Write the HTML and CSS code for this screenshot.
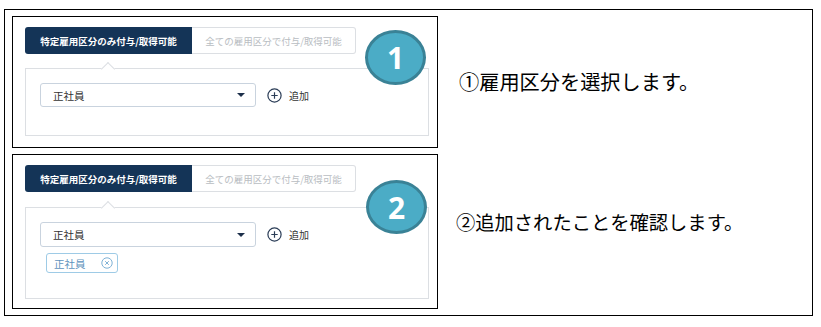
FILE: index.html
```html
<!DOCTYPE html>
<html lang="ja">
    <head>
        <meta charset="UTF-8" />
        <meta name="viewport" content="width=device-width, initial-scale=1.0" />
        <title>雇用区分の追加</title>
        <link rel="stylesheet" href="styles.css">
    </head>
    <body>
        <div class="frame">
            <div class="row">
                <div class="panel">
                    <div class="tabs">
                        <div class="tab tab-active">特定雇用区分のみ付与/取得可能</div>
                        <div class="tab">全ての雇用区分で付与/取得可能</div>
                    </div>
                    <div class="card card-short">
                        <div class="select-row">
                            <div class="select">
                                <span>正社員</span>
                                <span class="select-arrow"></span>
                            </div>
                            <svg class="add-icon" width="15" height="15" viewBox="0 0 15 15">
                                <circle cx="7.5" cy="7.5" r="6.6" fill="none" stroke="#2b3d57" stroke-width="1.2" />
                                <path d="M7.5 4.3v6.4M4.3 7.5h6.4" stroke="#2b3d57" stroke-width="1.2" />
                            </svg>
                            <span class="add-label">追加</span>
                        </div>
                    </div>
                    <div class="badge badge-one">1</div>
                </div>
                <div class="note note-one">①雇用区分を選択します。</div>
            </div>

            <div class="row">
                <div class="panel panel-tall">
                    <div class="tabs">
                        <div class="tab tab-active">特定雇用区分のみ付与/取得可能</div>
                        <div class="tab">全ての雇用区分で付与/取得可能</div>
                    </div>
                    <div class="card card-tall">
                        <div class="select-row">
                            <div class="select">
                                <span>正社員</span>
                                <span class="select-arrow"></span>
                            </div>
                            <svg class="add-icon" width="15" height="15" viewBox="0 0 15 15">
                                <circle cx="7.5" cy="7.5" r="6.6" fill="none" stroke="#2b3d57" stroke-width="1.2" />
                                <path d="M7.5 4.3v6.4M4.3 7.5h6.4" stroke="#2b3d57" stroke-width="1.2" />
                            </svg>
                            <span class="add-label">追加</span>
                        </div>
                        <div class="chip">
                            <span>正社員</span>
                            <svg class="chip-close" width="12" height="12" viewBox="0 0 12 12">
                                <circle cx="6" cy="6" r="5.2" fill="none" stroke="#7fb2d6" stroke-width="1" />
                                <path d="M4.2 4.2l3.6 3.6M7.8 4.2l-3.6 3.6" stroke="#7fb2d6" stroke-width="1" />
                            </svg>
                        </div>
                    </div>
                    <div class="badge badge-two">2</div>
                </div>
                <div class="note note-two">②追加されたことを確認します。</div>
            </div>
        </div>
    </body>
</html>
```

FILE: styles.css
```css
* {
    box-sizing: border-box;
}

body {
    margin: 0;
    background: #fff;
    font-family: "Noto Sans CJK JP", "Noto Sans", sans-serif;
    color: #000;
}

.frame {
    margin: 9px 0 0 4px;
    width: 809px;
    height: 307px;
    border: 1px solid #000;
    padding: 6px 0 0 7px;
    display: flex;
    flex-direction: column;
    gap: 6px;
}

.row {
    display: flex;
    align-items: center;
}

.panel {
    position: relative;
    width: 426px;
    height: 132px;
    border: 1px solid #000;
    padding: 10px 0 0 12px;
}

.panel-tall {
    height: 155px;
}

.tabs {
    display: flex;
    width: 331px;
    height: 27px;
}

.tab {
    display: flex;
    justify-content: center;
    align-items: center;
    font-size: 9.5px;
    white-space: nowrap;
    color: #b9bdc2;
    flex: 1;
    border: 1px solid #dcdfe3;
    border-left: none;
    border-radius: 0 3px 3px 0;
}

.tab-active {
    flex: 0 0 167px;
    background: #143457;
    color: #fff;
    font-weight: bold;
    border: none;
    border-radius: 3px 0 0 3px;
}

.card {
    position: relative;
    margin-top: 14px;
    width: 404px;
    border: 1px solid #dcdfe3;
    padding: 14px 0 0 14px;
}

.card::before {
    content: "";
    position: absolute;
    top: -5px;
    left: 77px;
    width: 9px;
    height: 9px;
    background: #fff;
    border-top: 1px solid #dcdfe3;
    border-left: 1px solid #dcdfe3;
    transform: rotate(45deg);
}

.card-short {
    height: 68px;
}

.card-tall {
    height: 92px;
    margin-top: 15px;
}

.select-row {
    display: flex;
    align-items: center;
}

.select {
    display: flex;
    align-items: center;
    justify-content: space-between;
    width: 216px;
    height: 24px;
    border: 1px solid #c9d3de;
    border-radius: 3px;
    padding: 0 10px 0 12px;
    font-size: 10.5px;
    color: #333;
}

.panel-tall .select {
    height: 25px;
}

.select-arrow {
    width: 0;
    height: 0;
    border-left: 4px solid transparent;
    border-right: 4px solid transparent;
    border-top: 4px solid #1c2f4a;
}

.add-icon {
    margin-left: 11px;
}

.add-label {
    margin-left: 7px;
    font-size: 10px;
    color: #333;
}

.chip {
    display: flex;
    align-items: center;
    justify-content: space-between;
    margin: 6px 0 0 6px;
    width: 72px;
    height: 20px;
    border: 1px solid #9ecbe6;
    border-radius: 3px;
    padding: 0 4px 0 7px;
    font-size: 10.5px;
    color: #5f93bd;
}

.badge {
    position: absolute;
    width: 61px;
    height: 55px;
    border-radius: 50%;
    background: #4bacc6;
    border: 3px solid #3a8296;
    color: #fff;
    font-family: "Open Sans", sans-serif;
    font-weight: bold;
    font-size: 30px;
    display: flex;
    justify-content: center;
    align-items: center;
}

.badge-one {
    left: 352px;
    top: 13px;
}

.badge-two {
    left: 353px;
    top: 25px;
    height: 54px;
}

.note {
    white-space: nowrap;
}

.note-one {
    margin-left: 21px;
    font-size: 20.2px;
    padding-bottom: 2px;
}

.note-two {
    margin-left: 18px;
    font-size: 19.3px;
    padding-bottom: 20px;
}
```
